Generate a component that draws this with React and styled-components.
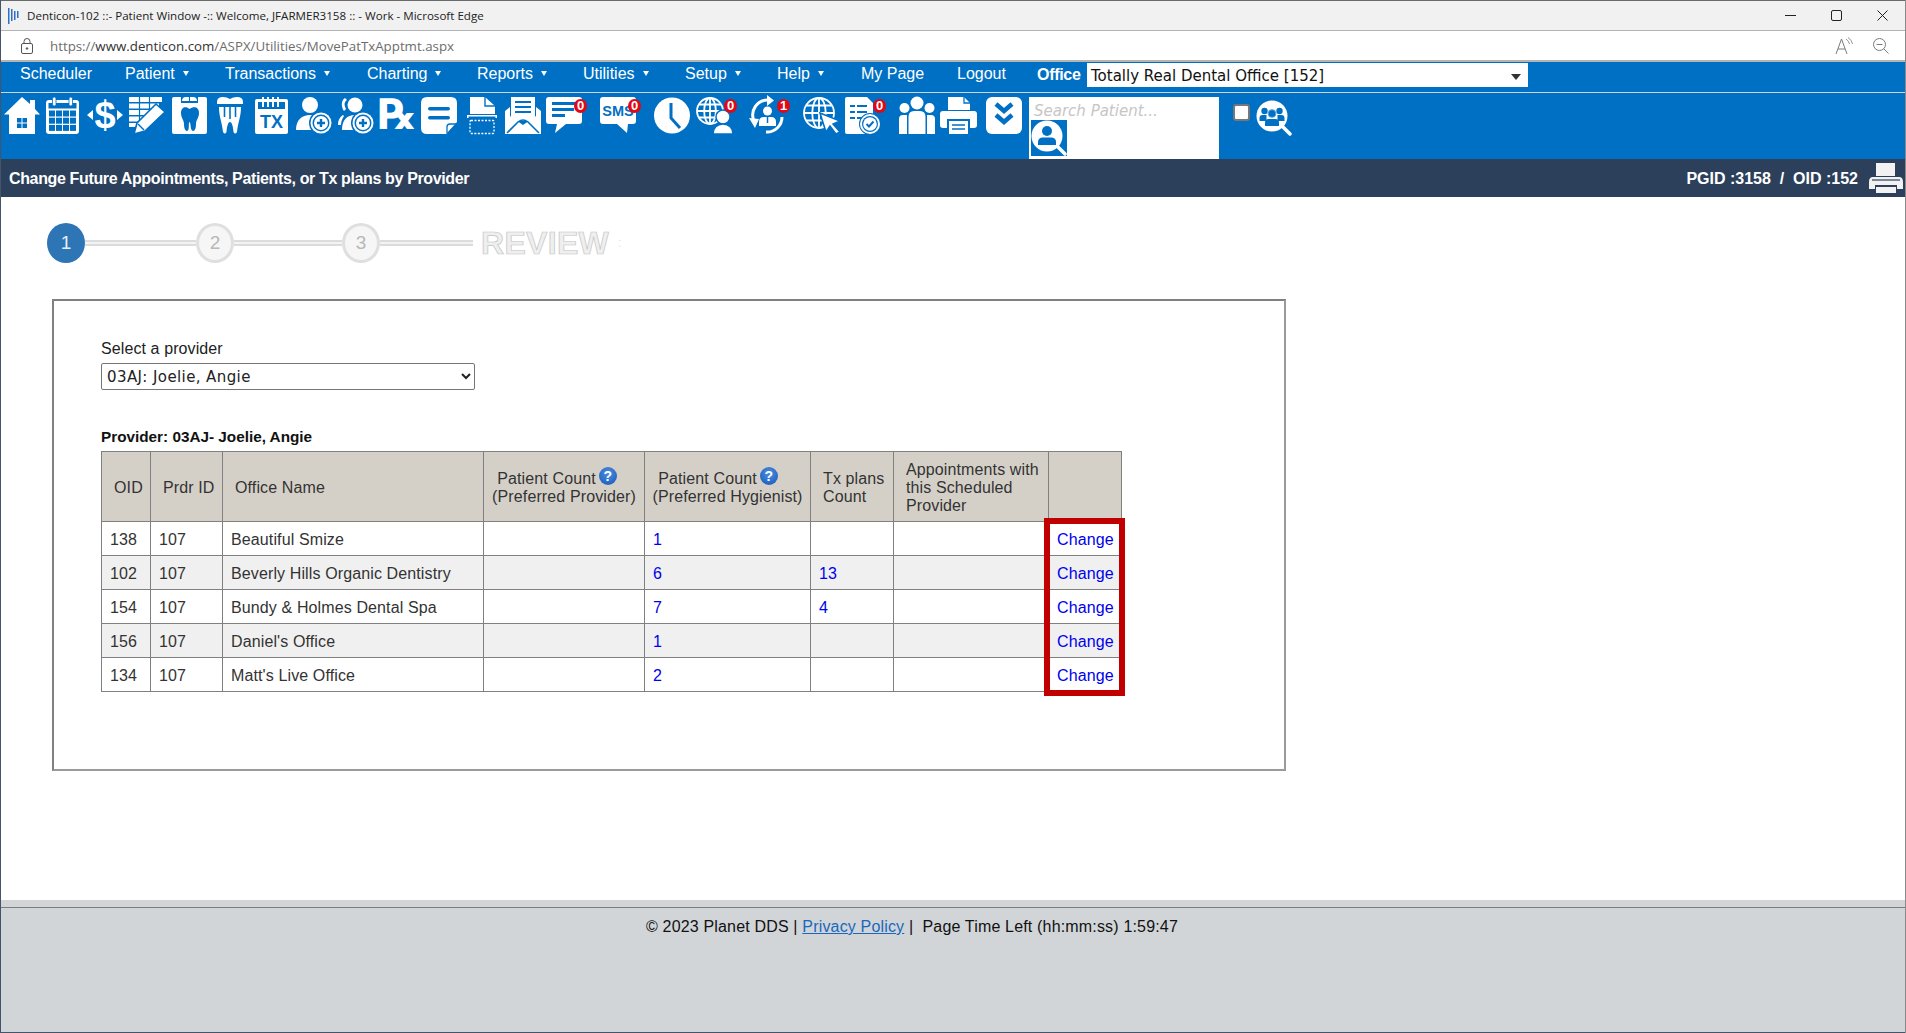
import React from 'react'
import styled, { createGlobalStyle } from 'styled-components'

const BLUE = '#0070c5'

const GlobalStyle = createGlobalStyle`
    html, body {
        margin: 0;
        padding: 0;
        background: #fff;
        overflow: hidden;
    }
    * {
        box-sizing: border-box;
    }
`

const Shell = styled.div`
    width: 1906px;
    height: 1033px;
    display: flex;
    flex-direction: column;
    border-left: 1px solid #44546a;
    border-right: 1px solid #8a8a8a;
    font-family: "Liberation Sans", Arial, sans-serif;
    color: #222;
    background: #fff;
`

const TitleBar = styled.div`
    height: 31px;
    flex: none;
    display: flex;
    align-items: center;
    background: #f1f1f1;
    border-top: 1px solid #6a6a6a;
    border-bottom: 1px solid #b4b4b4;
    padding-left: 7px;
`

const TitleText = styled.span`
    margin-left: 7px;
    font-family: "Open Sans", "Noto Sans", sans-serif;
    font-size: 11.6px;
    color: #222;
    white-space: nowrap;
`

const WindowButtons = styled.div`
    margin-left: auto;
    display: flex;
`

const WindowButton = styled.div`
    width: 46px;
    height: 29px;
    display: flex;
    align-items: center;
    justify-content: center;
`

const AddressBar = styled.div`
    height: 31px;
    flex: none;
    display: flex;
    align-items: center;
    background: #fff;
    border-bottom: 2px solid #b4b4b4;
    padding-left: 20px;
`

const Url = styled.span`
    margin-left: 17px;
    font-family: "Open Sans", "Noto Sans", sans-serif;
    font-size: 13.3px;
    color: #6d6d6d;
    white-space: nowrap;
    b {
        font-weight: 400;
        color: #333;
    }
`

const AddressTools = styled.div`
    margin-left: auto;
    display: flex;
    align-items: center;
    gap: 20px;
    padding-right: 16px;
`

const NavBar = styled.nav`
    height: 31px;
    flex: none;
    display: flex;
    align-items: center;
    background: ${BLUE};
    border-bottom: 1px solid #c9d5df;
    padding-left: 19px;
`

const NavItem = styled.a`
    width: ${(props) => props.$w}px;
    flex: none;
    display: flex;
    align-items: center;
    color: #fff;
    font-size: 16px;
    white-space: nowrap;
    margin-top: -7px;
`

const Caret = styled.span`
    margin-left: 8px;
    width: 0;
    height: 0;
    border-left: 3px solid transparent;
    border-right: 3px solid transparent;
    border-top: 5px solid #fff;
`

const OfficeLabel = styled.span`
    width: 50px;
    flex: none;
    margin-top: -5px;
    color: #fff;
    font-size: 16px;
    letter-spacing: -0.3px;
    font-weight: 700;
`

const OfficeSelect = styled.div`
    width: 441px;
    height: 24px;
    flex: none;
    margin-top: -4px;
    display: flex;
    align-items: center;
    justify-content: space-between;
    background: #fff;
    padding: 2px 7px 0 4px;
    font-family: "DejaVu Sans", Verdana, sans-serif;
    font-size: 15px;
    color: #111;
`

const DarkCaret = styled.span`
    width: 0;
    height: 0;
    margin-top: 1px;
    border-left: 5px solid transparent;
    border-right: 5px solid transparent;
    border-top: 6px solid #333;
`

const Toolbar = styled.div`
    height: 66px;
    flex: none;
    display: flex;
    align-items: flex-start;
    padding-top: 4px;
    background: ${BLUE};
`

const Tool = styled.div`
    position: relative;
    flex: none;
    width: 36px;
    height: 37px;
    margin-left: ${(props) => props.$ml}px;
    svg {
        display: block;
        overflow: visible;
    }
`

const Badge = styled.span`
    position: absolute;
    top: 2px;
    left: 28px;
    width: 13px;
    height: 14px;
    border-radius: 50%;
    background: #e30613;
    color: #fff;
    font-size: 13px;
    font-weight: 700;
    line-height: 14px;
    text-align: center;
`

const SearchBox = styled.div`
    width: 190px;
    height: 62px;
    flex: none;
    margin-left: 7px;
    background: #fff;
    display: flex;
    flex-direction: column;
    align-items: flex-start;
    padding: 4px 2px 0;
`

const SearchInput = styled.input`
    width: 180px;
    height: 19px;
    border: 0;
    outline: 0;
    padding: 0 0 0 3px;
    background: transparent;
    font-family: "DejaVu Sans", Verdana, sans-serif;
    font-size: 15px;
    font-style: italic;
    &::placeholder {
        color: #c6c6c6;
        opacity: 1;
    }
`

const SearchButton = styled.div`
    width: 36px;
    height: 36px;
    background: ${BLUE};
    svg {
        display: block;
    }
`

const ToolCheck = styled.input`
    appearance: none;
    width: 17px;
    height: 17px;
    flex: none;
    margin: 7px 0 0 14px;
    background: #fff;
    border: 2px solid #777;
    border-radius: 3px;
`

const GroupSearch = styled.div`
    width: 36px;
    height: 36px;
    flex: none;
    margin: 3px 0 0 6px;
    svg {
        display: block;
    }
`

const PageHeader = styled.div`
    height: 38px;
    flex: none;
    display: flex;
    align-items: center;
    justify-content: space-between;
    background: #2c405c;
    padding: 0 2px 0 8px;
    color: #fff;
    font-size: 16px;
    font-weight: 700;
    white-space: pre;
`

const HeaderTitle = styled.span`
    padding-top: 2px;
    letter-spacing: -0.36px;
`

const HeaderIds = styled.span`
    padding-top: 2px;
`

const HeaderRight = styled.div`
    display: flex;
    align-items: center;
    gap: 11px;
    svg {
        display: block;
    }
`

const Main = styled.main`
    flex: 1;
    padding: 26px 0 0 46px;
    background: #fff;
`

const Stepper = styled.div`
    display: flex;
    align-items: center;
    height: 40px;
`

const StepCircle = styled.div`
    width: 38px;
    height: 40px;
    flex: none;
    border-radius: 50%;
    display: flex;
    align-items: center;
    justify-content: center;
    font-size: 19px;
    color: ${(props) => (props.$active ? '#e6eef6' : '#b8b8b8')};
    background: ${(props) => (props.$active ? '#2e75b6' : '#f6f6f6')};
    border: ${(props) => (props.$active ? '0' : '3px solid #dfdfdf')};
`

const StepLine = styled.div`
    width: ${(props) => props.$w}px;
    height: 6px;
    flex: none;
    background: #f3f3f3;
    border-top: 2px solid #dcdcdc;
    border-bottom: 2px solid #dcdcdc;
`

const StepReview = styled.span`
    margin-left: 8px;
    font-size: 32px;
    font-weight: 700;
    letter-spacing: 0.3px;
    color: #efefef;
    -webkit-text-stroke: 0.7px #c4c4c4;
`

const StepDots = styled.span`
    margin-left: 9px;
    font-size: 12px;
    color: #e4e4e4;
`

const Panel = styled.section`
    width: 1234px;
    height: 472px;
    margin: 36px 0 0 5px;
    border: 2px solid #808080;
    border-right-color: #9a9a9a;
    border-bottom-color: #9a9a9a;
    padding: 38px 0 0 47px;
`

const FieldLabel = styled.div`
    font-size: 16px;
    line-height: 20px;
    letter-spacing: 0.1px;
    color: #222;
`

const ProviderSelect = styled.select`
    display: block;
    width: 374px;
    height: 27px;
    margin-top: 4px;
    padding: 0 1px;
    background: #fff;
    border: 1px solid #767676;
    border-radius: 2px;
    font-family: "DejaVu Sans", Verdana, sans-serif;
    font-size: 15px;
    letter-spacing: 0.4px;
    color: #222;
`

const ProviderTitle = styled.div`
    margin-top: 37px;
    font-size: 15.3px;
    font-weight: 700;
    line-height: 20px;
    color: #111;
`

const TableWrap = styled.div`
    position: relative;
    width: 1021px;
    margin-top: 4px;
`

const Grid = styled.table`
    width: 1020px;
    table-layout: fixed;
    border-collapse: collapse;
    font-size: 16px;
    letter-spacing: 0.12px;
    color: #333;
`

const HeadCell = styled.th`
    height: 70px;
    padding: ${(props) => (props.$center ? '0 2px' : '2px 1px 0 12px')};
    background: #d4d0c8;
    border: 1px solid #808080;
    font-weight: 400;
    line-height: 18px;
    text-align: ${(props) => (props.$center ? 'center' : 'left')};
`

const Cell = styled.td`
    height: 34px;
    padding: 2px 8px 0;
    border: 1px solid #808080;
    background: ${(props) => (props.$odd ? '#f0f0f0' : '#fff')};
`

const CountLink = styled.a`
    color: #0000ee;
`

const HelpDot = styled.span`
    display: inline-block;
    width: 18px;
    height: 18px;
    margin: 0 ${(props) => props.$mr}px 0 3px;
    border-radius: 50%;
    background: radial-gradient(circle at 50% 35%, #4d8fe0, #1555b8);
    color: #fff;
    font-size: 14px;
    font-weight: 700;
    line-height: 18px;
    text-align: center;
    vertical-align: 3px;
`

const Highlight = styled.div`
    position: absolute;
    left: 943px;
    top: 67px;
    width: 81px;
    height: 178px;
    border: 6px solid #c00000;
    pointer-events: none;
`

const Footer = styled.footer`
    height: 133px;
    flex: none;
    padding-top: 7px;
    background: #d1d5d8;
    border-bottom: 1px solid #44546a;
`

const FooterInner = styled.div`
    height: 100%;
    padding: 9px 82px 0 0;
    border-top: 1px solid #7c7c7c;
    font-size: 16px;
    line-height: 19px;
    letter-spacing: 0.17px;
    color: #111;
    text-align: center;
    white-space: pre;
    a {
        color: #1a68bd;
        text-decoration: underline;
    }
`

const T = ({ children, ...rest }) => (
    <text fontFamily='"Liberation Sans", Arial, sans-serif' fontWeight="700" {...rest}>{children}</text>
)

const Globe = ({ cx, cy, r }) => (
    <g fill="none" stroke="#fff" strokeWidth="1.8">
        <circle cx={cx} cy={cy} r={r} />
        <ellipse cx={cx} cy={cy} rx={r * 0.45} ry={r} />
        <path d={`M${cx} ${cy - r}V${cy + r}M${cx - r} ${cy}H${cx + r}M${cx - r * 0.85} ${cy - r * 0.5}H${cx + r * 0.85}M${cx - r * 0.85} ${cy + r * 0.5}H${cx + r * 0.85}`} />
    </g>
)

const PlusCircle = ({ cx, cy }) => (
    <>
        <circle cx={cx} cy={cy} r="12" fill={BLUE} />
        <circle cx={cx} cy={cy} r="10.5" fill="#fff" />
        <circle cx={cx} cy={cy} r="8.5" fill={BLUE} />
        <circle cx={cx} cy={cy} r="7" fill="#fff" />
        <path d={`M${cx - 4} ${cy}H${cx + 4}M${cx} ${cy - 4}V${cy + 4}`} stroke={BLUE} strokeWidth="2.4" />
    </>
)

const ICONS = {
    home: (
        <>
            <path d="M18 0L26 7V3H31V12L36 17.5H31V37H5V17.5H0Z" fill="#fff" />
            <path d="M13 21h4.5v4.5H13zM18.5 21H23v4.5h-4.5zM13 26.5h4.5V31H13zM18.5 26.5H23V31h-4.5z" fill={BLUE} />
        </>
    ),
    calendar: (
        <>
            <rect y="3" width="33" height="34" rx="3" fill="#fff" />
            <rect x="2.5" y="6" width="28" height="5.5" fill={BLUE} />
            {[0, 1, 2, 3].map((c) => [0, 1, 2].map((r) => (
                <rect key={`${c}${r}`} x={3 + c * 7} y={13.5 + r * 7.2} width="6" height="6" fill={BLUE} />
            )))}
            <rect x="6.5" y="0" width="3.5" height="9" rx="1.7" fill="#fff" stroke={BLUE} strokeWidth=".8" />
            <rect x="23" y="0" width="3.5" height="9" rx="1.7" fill="#fff" stroke={BLUE} strokeWidth=".8" />
        </>
    ),
    dollar: (
        <>
            <T x="18" y="31" fontSize="38" textAnchor="middle" fill="#fff">$</T>
            <path d="M0 18L6 13V23ZM36 18L30 13V23Z" fill="#fff" />
        </>
    ),
    edit: (
        <>
            <path d="M0 0H33V5H0ZM0 6.5H30V11.5H0ZM0 13H23V18H0ZM0 19.5H16V24.5H0ZM0 26H9V30H0Z" fill="#fff" />
            <path d="M10.5 0V30M20.5 0V20" stroke={BLUE} strokeWidth="1.2" />
            <path d="M5 37L8 26L27 7L36 15L16 34Z" fill="#fff" stroke={BLUE} strokeWidth="1.6" />
            <path d="M9 27L15 33" stroke={BLUE} strokeWidth="1.4" />
        </>
    ),
    tooth: (
        <>
            <rect width="35" height="37" rx="2" fill="#fff" />
            <path d="M9 0H26V6H9Z" fill={BLUE} />
            <path d="M10 4Q10 0 14 0H17V4ZM18 4V0H21Q25 0 25 4Z" fill="#fff" />
            <path d="M17.5 12C14 9 9 10 9 16c0 5 3 7 3 11 0 4 1 7 3 7 3 0 1-9 2.5-9S18 34 21 34c2 0 3-3 3-7 0-4 3-6 3-11 0-6-5-7-9.5-4Z" fill={BLUE} />
        </>
    ),
    crown: (
        <>
            <path d="M0 5Q0 0 6 0Q10 0 13 2Q16 0 20 0Q26 0 26 5V7H0Z" fill="#fff" />
            <path d="M2 10H24C24 20 21 25 20 35Q18 38 16.5 35C16 28 14.5 25 13 25C11.5 25 10 28 9.5 35Q8 38 6 35C5 25 2 20 2 10Z" fill="#fff" />
            <path d="M7.5 10V20M13 10V22M18.5 10V20" stroke={BLUE} strokeWidth="1.6" />
        </>
    ),
    tx: (
        <>
            <rect y="2" width="33" height="35" rx="2" fill="#fff" />
            <rect x="3" y="5" width="27" height="7" fill={BLUE} />
            <path d="M7 0h2v10H7zM12 0h2v10h-2zM17 0h2v10h-2zM22 0h2v10h-2z" fill="#fff" />
            <T x="16.5" y="31" fontSize="18" textAnchor="middle" fill={BLUE}>TX</T>
        </>
    ),
    addPerson: (
        <>
            <circle cx="14" cy="8" r="8" fill="#fff" />
            <path d="M0 33C0 23 6 18 14 18C20 18 26 21 28 27H0Z M0 27H20V33H0Z" fill="#fff" />
            <PlusCircle cx={25} cy={26} />
        </>
    ),
    addPerson2: (
        <>
            <circle cx="17" cy="8" r="7.5" fill="#fff" />
            <path d="M7 1C3 3 3 10 6 14L8 12C6 8 6 5 9 3ZM0 28C0 23 2 20 5 18L6 19C4 22 3 25 3 28Z" fill="#fff" />
            <path d="M4 33C4 23 9 18 17 18C22 18 26 21 28 27H4Z M4 27H20V33H4Z" fill="#fff" />
            <PlusCircle cx={25} cy={26} />
        </>
    ),
    rx: (
        <text x="-3" y="32" fontFamily='"DejaVu Sans", sans-serif' fontWeight="700" fontSize="42" fill="#fff">℞</text>
    ),
    note: (
        <>
            <path d="M6 0H30Q36 0 36 6V25L25 37H6Q0 37 0 31V6Q0 0 6 0Z" fill="#fff" />
            <rect x="7" y="10" width="22" height="3.5" rx="1.7" fill={BLUE} />
            <rect x="7" y="19" width="22" height="3.5" rx="1.7" fill={BLUE} />
            <path d="M26 36V30Q26 27 29 27H35" fill="none" stroke={BLUE} strokeWidth="1.3" />
        </>
    ),
    scan: (
        <>
            <path d="M3 0H18L28 9V17H3Z" fill="#fff" />
            <path d="M18 0V9H28" fill="none" stroke={BLUE} strokeWidth="1.4" />
            <path d="M0 18H30V21H28.5V19.5H1.5V21H0Z" fill="#fff" />
            <rect x="3" y="23.5" width="24" height="13" rx="1" fill="none" stroke="#fff" strokeWidth="1.3" strokeDasharray="2 1.5" />
        </>
    ),
    mail: (
        <>
            <rect x="6" y="0" width="24" height="24" fill="#fff" />
            <path d="M10 5H26M10 10H26M10 15H26" stroke={BLUE} strokeWidth="2" />
            <path d="M0 14L5 10V19L18 28L31 19V10L36 14V37H0Z" fill="#fff" />
            <path d="M2 36L13 25Q18 21 23 25L34 36" fill="none" stroke={BLUE} strokeWidth="1.6" />
        </>
    ),
    message: (
        <>
            <path d="M3 0H33Q36 0 36 3V24Q36 27 33 27H20L9 36L11 27H3Q0 27 0 24V3Q0 0 3 0Z" fill="#fff" />
            <path d="M6 5h24v3H6zM6 11h22v3H6zM6 17h13v3H6z" fill={BLUE} />
        </>
    ),
    sms: (
        <>
            <path d="M3 0H33Q36 0 36 3V24Q36 27 33 27H28L27 36L17 27H3Q0 27 0 24V3Q0 0 3 0Z" fill="#fff" />
            <T x="18" y="19" fontSize="14.5" textAnchor="middle" fill={BLUE}>SMS</T>
        </>
    ),
    clock: (
        <>
            <circle cx="18" cy="18.5" r="18" fill="#fff" />
            <path d="M17 6V21L26 31" fill="none" stroke={BLUE} strokeWidth="3" />
        </>
    ),
    globePerson: (
        <>
            <Globe cx={14} cy={14} r={13} />
            <circle cx="27" cy="20" r="7" fill="#fff" stroke={BLUE} strokeWidth="1.5" />
            <path d="M17 37C17 31 21 27 27 27C33 27 37 31 37 37Z" fill="#fff" stroke={BLUE} strokeWidth="1.5" />
        </>
    ),
    recall: (
        <>
            <path d="M19 3A15 15 0 0 0 5 24" fill="none" stroke="#fff" strokeWidth="3" />
            <path d="M17 35A15 15 0 0 0 33 20" fill="none" stroke="#fff" strokeWidth="3" />
            <path d="M18 -2L25 3.5L18 9ZM0 21L10 22L6 31Z" fill="#fff" />
            <circle cx="18.5" cy="14" r="4.5" fill="#fff" />
            <path d="M10 29V25Q10 20 15 20H22Q27 20 27 25V29Z" fill="#fff" />
            <path d="M18.5 20V26" stroke={BLUE} strokeWidth="1.5" />
        </>
    ),
    globeCursor: (
        <>
            <Globe cx={16} cy={16} r={15} />
            <path d="M17 16L37 24L30 27L37 35L33 37L27 29L23 35Z" fill="#fff" stroke={BLUE} strokeWidth="1.5" />
        </>
    ),
    docCheck: (
        <>
            <path d="M2 0H22L28 6V37H2Q0 37 0 35V2Q0 0 2 0Z" fill="#fff" />
            <path d="M5 9H10M12 9H22M5 15H10M12 15H22M5 21H10M12 21H18" stroke={BLUE} strokeWidth="2.2" />
            <circle cx="25" cy="27" r="11" fill={BLUE} />
            <circle cx="25" cy="27" r="10" fill="#fff" />
            <circle cx="25" cy="27" r="8" fill={BLUE} />
            <circle cx="25" cy="27" r="6.8" fill="#fff" />
            <path d="M21.5 27L24 29.5L28.5 24.5" fill="none" stroke={BLUE} strokeWidth="2" />
        </>
    ),
    family: (
        <>
            <circle cx="18" cy="6" r="6.5" fill="#fff" />
            <circle cx="5.5" cy="11" r="5" fill="#fff" />
            <circle cx="30.5" cy="11" r="5" fill="#fff" />
            <path d="M9.5 37V20Q9.5 14 15 14H21Q26.5 14 26.5 20V37Z" fill="#fff" />
            <path d="M0 37V22Q0 18 4 18H8V37ZM28 37V18H32Q36 18 36 22V37Z" fill="#fff" />
        </>
    ),
    printer: (
        <>
            <path d="M8 0H24L30 6V13H8Z" fill="#fff" />
            <path d="M24 0V6H30" fill="none" stroke={BLUE} strokeWidth="1.3" />
            <rect y="14" width="37" height="17" rx="3" fill="#fff" />
            <rect x="7" y="22" width="23" height="15" fill={BLUE} />
            <rect x="9" y="24" width="19" height="13" fill="#fff" />
            <path d="M12 28H25M12 32H25" stroke={BLUE} strokeWidth="1.5" />
        </>
    ),
    chevrons: (
        <>
            <rect width="36" height="37" rx="6" fill="#fff" />
            <path d="M10 7L18 14L26 7M10 18L18 25L26 18" fill="none" stroke={BLUE} strokeWidth="4.5" />
        </>
    ),
}

const TOOLS = [
    { name: 'home', ml: 3 },
    { name: 'calendar', ml: 6 },
    { name: 'dollar', ml: 5 },
    { name: 'edit', ml: 6 },
    { name: 'tooth', ml: 7 },
    { name: 'crown', ml: 9 },
    { name: 'tx', ml: 2 },
    { name: 'addPerson', ml: 5 },
    { name: 'addPerson2', ml: 6 },
    { name: 'rx', ml: 7 },
    { name: 'note', ml: 4 },
    { name: 'scan', ml: 10 },
    { name: 'mail', ml: 2 },
    { name: 'message', ml: 5, badge: 0 },
    { name: 'sms', ml: 18, badge: 0 },
    { name: 'clock', ml: 18 },
    { name: 'globePerson', ml: 6, badge: 0 },
    { name: 'recall', ml: 17, badge: 1 },
    { name: 'globeCursor', ml: 18 },
    { name: 'docCheck', ml: 6, badge: 0 },
    { name: 'family', ml: 18 },
    { name: 'printer', ml: 5 },
    { name: 'chevrons', ml: 10 },
]

const NAV = [
    { label: 'Scheduler', w: 105 },
    { label: 'Patient', w: 100, caret: true },
    { label: 'Transactions', w: 142, caret: true },
    { label: 'Charting', w: 110, caret: true },
    { label: 'Reports', w: 106, caret: true },
    { label: 'Utilities', w: 102, caret: true },
    { label: 'Setup', w: 92, caret: true },
    { label: 'Help', w: 84, caret: true },
    { label: 'My Page', w: 96 },
    { label: 'Logout', w: 80 },
]

const ROWS = [
    { oid: 138, office: 'Beautiful Smize', hyg: 1 },
    { oid: 102, office: 'Beverly Hills Organic Dentistry', hyg: 6, tx: 13 },
    { oid: 154, office: 'Bundy & Holmes Dental Spa', hyg: 7, tx: 4 },
    { oid: 156, office: "Daniel's Office", hyg: 1 },
    { oid: 134, office: "Matt's Live Office", hyg: 2 },
]

const COLS = [49, 72, 261, 161, 166, 83, 155, 73]

const UserSearchIcon = () => (
    <svg width="36" height="36" viewBox="0 0 36 36">
        <path d="M25 25L34 34" stroke="#fff" strokeWidth="3.5" strokeLinecap="round" />
        <circle cx="16" cy="16" r="15.5" fill="#fff" />
        <circle cx="16" cy="11" r="5" fill={BLUE} />
        <path d="M7 25V22Q7 17.5 12 17.5H20Q25 17.5 25 22V25Z" fill={BLUE} />
    </svg>
)

const GroupSearchIcon = () => (
    <svg width="36" height="36" viewBox="0 0 36 36">
        <path d="M25 25L34 34" stroke="#fff" strokeWidth="3.5" strokeLinecap="round" />
        <circle cx="16" cy="16" r="15.5" fill="#fff" />
        <circle cx="8.5" cy="11" r="3.2" fill={BLUE} />
        <circle cx="23.5" cy="11" r="3.2" fill={BLUE} />
        <path d="M3.5 21V18Q3.5 15 6.5 15H10.5V21ZM21.5 21V15H25.5Q28.5 15 28.5 18V21Z" fill={BLUE} />
        <circle cx="16" cy="13.5" r="4" fill="#fff" stroke={BLUE} strokeWidth=".6" />
        <circle cx="16" cy="13.5" r="3.5" fill={BLUE} />
        <path d="M9 26V22.5Q9 19 12.5 19H19.5Q23 19 23 22.5V26Z" fill={BLUE} />
    </svg>
)

const HeaderPrinter = () => (
    <svg width="34" height="30" viewBox="0 0 34 30">
        <rect x="7" y="0" width="19" height="13" fill="#f2f2f2" />
        <path d="M4 14H30Q34 14 34 19V26H28V22H6V26H0V19Q0 14 4 14Z" fill="#f2f2f2" />
        <path d="M3 17H31" stroke="#2c405c" strokeWidth="1.2" />
        <rect x="7" y="24" width="20" height="6" fill="#f2f2f2" />
    </svg>
)

const Favicon = () => (
    <svg width="12" height="16" viewBox="0 0 12 16">
        <path d="M0 0H1.5V16H0ZM3 1H4.5V13H3ZM6 3H7.5V12H6ZM9 3H10.5V10H9Z" fill="#2f6fc6" />
    </svg>
)

const LockIcon = () => (
    <svg width="12" height="16" viewBox="0 0 12 16" fill="none" stroke="#555" strokeWidth="1">
        <rect x=".5" y="5.5" width="11" height="10" rx="1.5" />
        <path d="M3 5.5V3.5Q3 .5 6 .5Q9 .5 9 3.5V5.5" />
        <circle cx="6" cy="10.5" r=".8" fill="#555" />
    </svg>
)

const ReadAloudIcon = () => (
    <svg width="18" height="18" viewBox="0 0 18 18" fill="none" stroke="#7a7a7a" strokeWidth="1">
        <path d="M1 17L6.5 2L12 17M3 12H10" />
        <path d="M11 2Q14 4 14.5 7M13 .5Q17 3 17.5 7" strokeWidth=".8" />
    </svg>
)

const ZoomOutIcon = () => (
    <svg width="16" height="16" viewBox="0 0 16 16" fill="none" stroke="#7a7a7a" strokeWidth="1">
        <circle cx="6.5" cy="6.5" r="6" />
        <path d="M10.8 10.8L15.5 15.5M3.5 6.5H9.5" />
    </svg>
)

const App = () => {
    return (
        <Shell>
            <GlobalStyle />
            <TitleBar>
                <Favicon />
                <TitleText>Denticon-102 ::- Patient Window -:: Welcome, JFARMER3158 :: - Work - Microsoft Edge</TitleText>
                <WindowButtons>
                    <WindowButton>
                        <svg width="11" height="11" viewBox="0 0 11 11"><path d="M0 5.5H11" stroke="#222" /></svg>
                    </WindowButton>
                    <WindowButton>
                        <svg width="11" height="11" viewBox="0 0 11 11"><rect x=".5" y=".5" width="10" height="10" rx="1.5" fill="none" stroke="#222" /></svg>
                    </WindowButton>
                    <WindowButton>
                        <svg width="11" height="11" viewBox="0 0 11 11"><path d="M.5 .5L10.5 10.5M10.5 .5L.5 10.5" stroke="#222" /></svg>
                    </WindowButton>
                </WindowButtons>
            </TitleBar>
            <AddressBar>
                <LockIcon />
                <Url>https://<b>www.denticon.com</b>/ASPX/Utilities/MovePatTxApptmt.aspx</Url>
                <AddressTools>
                    <ReadAloudIcon />
                    <ZoomOutIcon />
                </AddressTools>
            </AddressBar>
            <NavBar>
                {NAV.map((item) => (
                    <NavItem key={item.label} $w={item.w}>
                        {item.label}
                        {item.caret && <Caret />}
                    </NavItem>
                ))}
                <OfficeLabel>Office</OfficeLabel>
                <OfficeSelect>
                    Totally Real Dental Office [152]
                    <DarkCaret />
                </OfficeSelect>
            </NavBar>
            <Toolbar>
                {TOOLS.map((tool) => (
                    <Tool key={tool.name} $ml={tool.ml}>
                        <svg width="36" height="37" viewBox="0 0 36 37">{ICONS[tool.name]}</svg>
                        {tool.badge !== undefined && <Badge>{tool.badge}</Badge>}
                    </Tool>
                ))}
                <SearchBox>
                    <SearchInput placeholder="Search Patient..." />
                    <SearchButton>
                        <UserSearchIcon />
                    </SearchButton>
                </SearchBox>
                <ToolCheck type="checkbox" />
                <GroupSearch>
                    <GroupSearchIcon />
                </GroupSearch>
            </Toolbar>
            <PageHeader>
                <HeaderTitle>Change Future Appointments, Patients, or Tx plans by Provider</HeaderTitle>
                <HeaderRight>
                    <HeaderIds>PGID :3158  /  OID :152</HeaderIds>
                    <HeaderPrinter />
                </HeaderRight>
            </PageHeader>
            <Main>
                <Stepper>
                    <StepCircle $active>1</StepCircle>
                    <StepLine $w={111} />
                    <StepCircle>2</StepCircle>
                    <StepLine $w={108} />
                    <StepCircle>3</StepCircle>
                    <StepLine $w={93} />
                    <StepReview>REVIEW</StepReview>
                    <StepDots>:</StepDots>
                </Stepper>
                <Panel>
                    <FieldLabel>Select a provider</FieldLabel>
                    <ProviderSelect defaultValue="03AJ">
                        <option value="03AJ">03AJ: Joelie, Angie</option>
                    </ProviderSelect>
                    <ProviderTitle>Provider: 03AJ- Joelie, Angie</ProviderTitle>
                    <TableWrap>
                        <Grid>
                            <colgroup>
                                {COLS.map((w, i) => <col key={i} width={w} />)}
                            </colgroup>
                            <thead>
                                <tr>
                                    <HeadCell>OID</HeadCell>
                                    <HeadCell>Prdr ID</HeadCell>
                                    <HeadCell>Office Name</HeadCell>
                                    <HeadCell $center>Patient Count<HelpDot $mr={14}>?</HelpDot><br />(Preferred Provider)</HeadCell>
                                    <HeadCell $center>Patient Count<HelpDot $mr={19}>?</HelpDot><br />(Preferred Hygienist)</HeadCell>
                                    <HeadCell>Tx plans Count</HeadCell>
                                    <HeadCell>Appointments with this Scheduled Provider</HeadCell>
                                    <HeadCell />
                                </tr>
                            </thead>
                            <tbody>
                                {ROWS.map((row, i) => (
                                    <tr key={row.oid}>
                                        <Cell $odd={i % 2 === 1}>{row.oid}</Cell>
                                        <Cell $odd={i % 2 === 1}>107</Cell>
                                        <Cell $odd={i % 2 === 1}>{row.office}</Cell>
                                        <Cell $odd={i % 2 === 1} />
                                        <Cell $odd={i % 2 === 1}><CountLink>{row.hyg}</CountLink></Cell>
                                        <Cell $odd={i % 2 === 1}>{row.tx && <CountLink>{row.tx}</CountLink>}</Cell>
                                        <Cell $odd={i % 2 === 1} />
                                        <Cell $odd={i % 2 === 1}><CountLink>Change</CountLink></Cell>
                                    </tr>
                                ))}
                            </tbody>
                        </Grid>
                        <Highlight />
                    </TableWrap>
                </Panel>
            </Main>
            <Footer>
                <FooterInner>© 2023 Planet DDS | <a>Privacy Policy</a> |  Page Time Left (hh:mm:ss) 1:59:47</FooterInner>
            </Footer>
        </Shell>
    )
}

export default App
